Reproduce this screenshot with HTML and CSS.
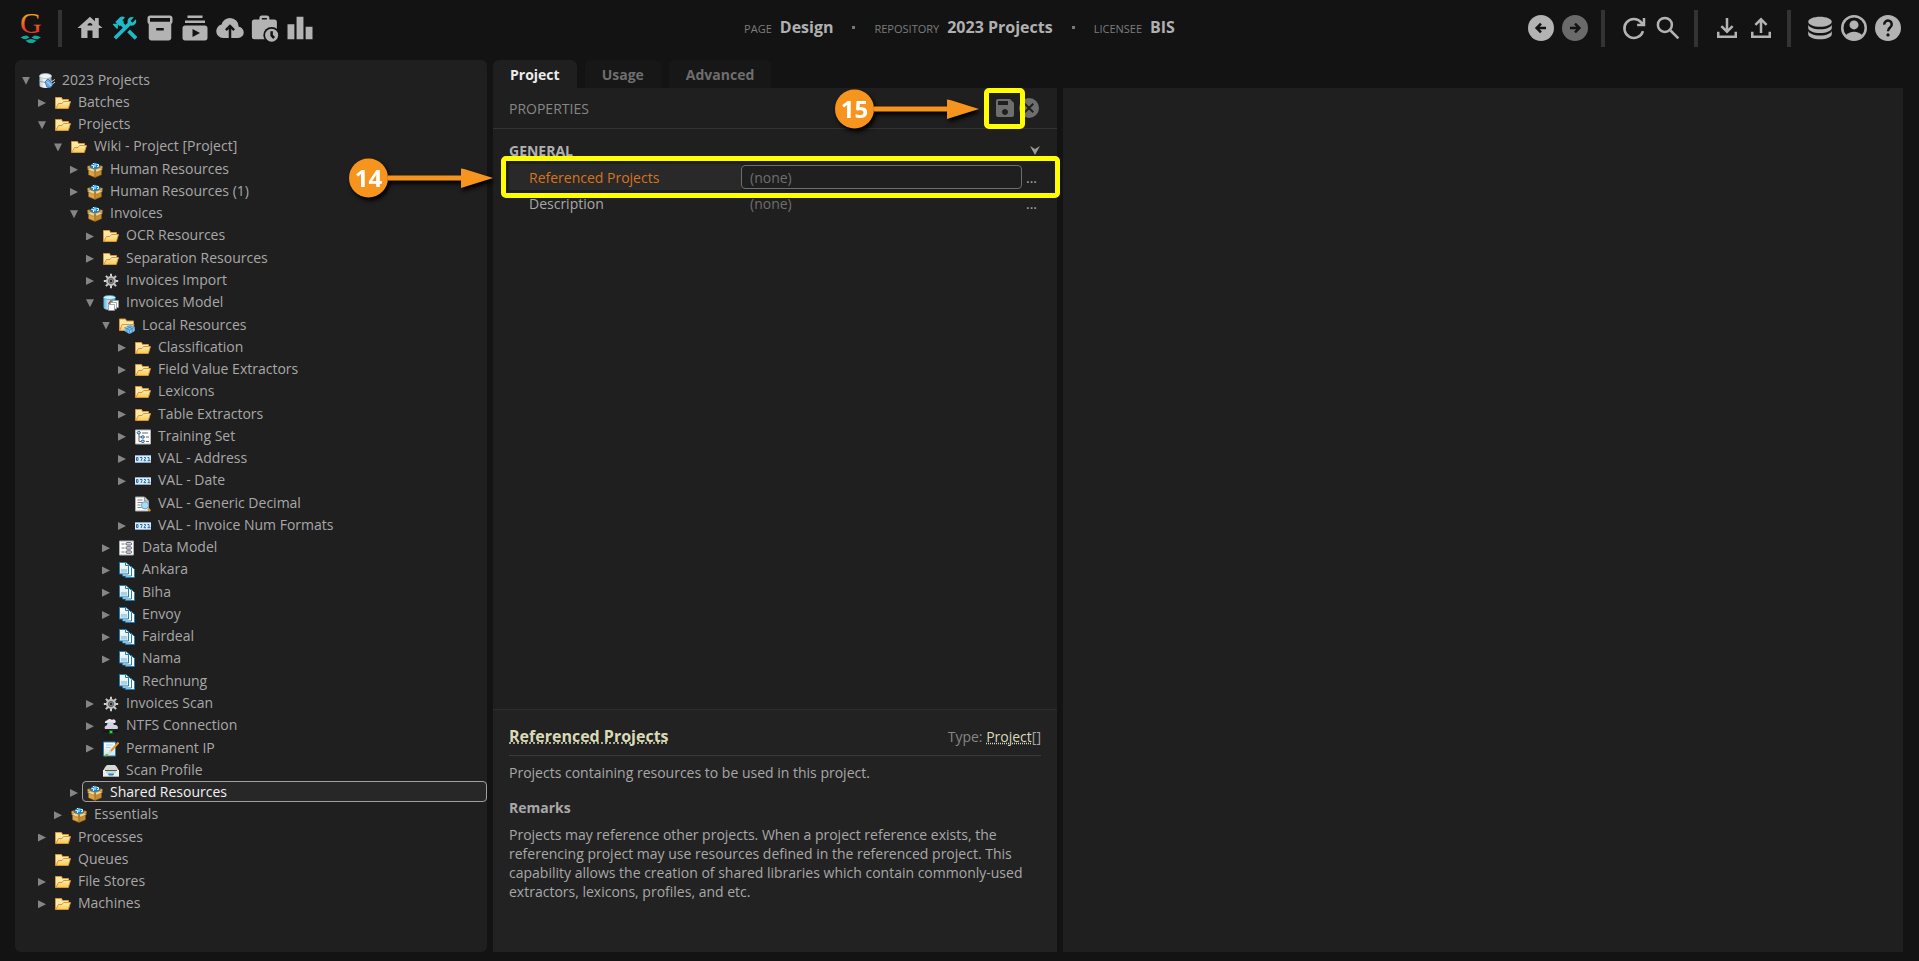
FILE: index.html
```html
<!DOCTYPE html>
<html lang="en">
<head>
<meta charset="utf-8">
<title>Design - 2023 Projects</title>
<link rel="stylesheet" href="styles.css">
</head>
<body>
<svg class="defs" aria-hidden="true">
  <defs>
    <linearGradient id="flame" x1="0" y1="0" x2="0" y2="1"><stop offset="0.25" stop-color="#f6a21d"/><stop offset="0.75" stop-color="#e8372a"/></linearGradient>
    <linearGradient id="gold" x1="0" y1="0" x2="0" y2="1"><stop offset="0" stop-color="#ffeeb0"/><stop offset="1" stop-color="#fbc956"/></linearGradient>
    <linearGradient id="steel" x1="0" y1="0" x2="1" y2="0"><stop offset="0" stop-color="#b9c6cf"/><stop offset="0.4" stop-color="#f3f7f9"/><stop offset="1" stop-color="#8fa0ab"/></linearGradient>
    <linearGradient id="aqua" x1="0" y1="0" x2="1" y2="0"><stop offset="0" stop-color="#5db4dc"/><stop offset="0.4" stop-color="#c2e8f8"/><stop offset="1" stop-color="#2c8fc2"/></linearGradient>
    <linearGradient id="sheet" x1="0" y1="0" x2="0" y2="1"><stop offset="0" stop-color="#ffffff"/><stop offset="1" stop-color="#cfe7ef"/></linearGradient>
  </defs>
  <symbol id="folder" viewBox="0 0 16 16">
    <path d="M.5 13.500V2.500H6.500L7.500 4.500H13.500V7" fill="#ffe9a6" stroke="#d8983a"/>
    <path d="M.8 13.500 3.500 8.500H7L8.500 6.500H15.500L13.300 13.500Z" fill="url(#gold)" stroke="#d8983a"/>
  </symbol>
  <symbol id="repo" viewBox="0 0 16 16">
    <path d="M.5 3V12.500C.5 14 3 15 6.500 15S12.500 14 12.500 12.500V3Z" fill="url(#steel)"/>
    <ellipse cx="6.500" cy="3" rx="6" ry="2.500" fill="#eef4f7" stroke="#a9b8c1" stroke-width=".7"/>
    <path d="M.5 7.500C2 9.800 11 9.800 12.500 7.500" fill="none" stroke="#8799a5"/>
    <path d="M6 9 9 6 14 11 11.500 14.500 8 14Z" fill="#67aee8" stroke="#2f6fae" stroke-width=".8"/>
    <path d="M12 9 15.800 6.500M13.500 11 16 9M8 8.500 12.500 13" stroke="#d6dfe5" stroke-width="1"/>
  </symbol>
  <symbol id="crate" viewBox="0 0 16 16">
    <path d="M2.800 6A5.200 5.200 0 0 1 13.200 6L8 8Z" fill="#1a86c8"/>
    <path d="M4.500 3.500H6.500V6M8 1.500V5M9.500 2.500h2v2H10M6 1.500h1" stroke="#e7f6ff" stroke-width="1" fill="none"/>
    <path d="M.3 4.500 2.500 3.500 3.500 6 1 7.500ZM15.700 4.500 13.500 3.500 12.500 6 15 7.500Z" fill="#dfae55" stroke="#8a5a1a" stroke-width=".5"/>
    <path d="M1.500 7.500 8 8.500V15.500L1.500 12.800Z" fill="#dca548" stroke="#8a5a1a" stroke-width=".5"/>
    <path d="M14.500 7.500 8 8.500V15.500L14.500 12.800Z" fill="#c88b30" stroke="#8a5a1a" stroke-width=".5"/>
    <path d="M.6 7.500 3 5.800 8 7.500 6.500 10.300ZM15.400 7.500 13 5.800 8 7.500 9.500 10.300Z" fill="#f5d592" stroke="#9a6a25" stroke-width=".5"/>
  </symbol>
  <symbol id="gear" viewBox="0 0 16 16">
    <path d="M8 .8V15.200M.8 8H15.200M2.900 2.900 13.100 13.100M13.100 2.900 2.900 13.100" stroke="#cfcfcf" stroke-width="2"/>
    <circle cx="8" cy="8" r="5" fill="#bdbdbd"/>
    <circle cx="8" cy="8" r="2.600" fill="#8a8a8a" stroke="#5c5c5c"/><circle cx="8" cy="8" r="1.200" fill="#222"/>
  </symbol>
  <symbol id="model" viewBox="0 0 16 16">
    <path d="M.5 2.500V12C.5 14 3 14.800 6.500 14.800S12.500 14 12.500 12V2.500Z" fill="url(#aqua)"/>
    <ellipse cx="6.500" cy="2.500" rx="6" ry="2" fill="#d6f0fb" stroke="#4aa3cf" stroke-width=".8"/>
    <path d="M5.500 9 8.500 5.500" stroke="#d8342b" stroke-width="1.500"/><path d="M8 6 10 5" stroke="#4caf3a" stroke-width="1.500"/>
    <g fill="#fff" stroke="#8d949a" stroke-width=".8"><path d="M9.500 5.500h6v7h-6z"/><path d="M7.500 7.500h6v6.500h-6z"/><path d="M5.500 9.500h6v6h-6z"/></g>
  </symbol>
  <symbol id="local" viewBox="0 0 16 16">
    <path d="M.5 12.500V1H6.500L7.500 3H14.500V6" fill="#ffe9a6" stroke="#d8983a"/>
    <path d="M.8 12.500 3 6.500H15L13 12.500Z" fill="url(#gold)" stroke="#d8983a"/>
    <path d="M5.500 9.500 11 6.500 15.800 9V13L10.500 16 5.500 13Z" fill="#7cc0ee"/>
    <path d="M5.500 9.500 10.500 12 15.800 9M10.500 12V16M8 8 13.300 10.600V14.400M13.300 7.800 8 10.800V14.500" fill="none" stroke="#3f88c5" stroke-width=".7"/>
  </symbol>
  <symbol id="training" viewBox="0 0 16 16">
    <path d="M.5 1h15v14H.5z" fill="#fff" stroke="#b8b8b8"/>
    <path d="M4 4v8.500M4 8h3M4 12.500h3M7 4h6M11 8h3M11 12.500h3" stroke="#666" fill="none"/>
    <g fill="#bfe0ff" stroke="#265d9c"><ellipse cx="3.800" cy="3.700" rx="1.600" ry="1.200"/><ellipse cx="7.800" cy="8" rx="1.600" ry="1.200"/><ellipse cx="7.800" cy="12.300" rx="1.600" ry="1.200"/></g>
  </symbol>
  <symbol id="digits" viewBox="0 0 16 16">
    <path d="M0 4h16v8H0z" fill="#dceaf6"/><path d="M0 4.500h16M0 11.500h16" stroke="#8fa6c6"/>
    <path d="M1.500 6.500h1.500v3H1.500zM5 6.500h2v1L6 10M9 6.500h1.500v1.300L9 9v.7h2M12.500 6.500h1.500v3M12.500 9.700h3" fill="none" stroke="#2373ab" stroke-width="1"/>
  </symbol>
  <symbol id="lookup" viewBox="0 0 16 16">
    <path d="M.5 1h9l4 4v10H.5z" fill="#f8f8f8" stroke="#aaa"/><path d="M9.500 1v4h4" fill="#ccc" stroke="#999"/>
    <path d="M2.500 4h5M2.500 6.500h5M2.500 9h3M2.500 11.500h4" stroke="#888"/>
    <circle cx="10" cy="9.300" r="3.600" fill="#a9ddf5" stroke="#5aa6d0"/><path d="M13 12.500 15.300 15" stroke="#e8951f" stroke-width="2.200"/>
  </symbol>
  <symbol id="datamodel" viewBox="0 0 16 16">
    <path d="M.5 1h14v14H.5z" fill="#fff" stroke="#a9adb8"/>
    <path d="M2.500 4h3M2.500 8h3M2.500 12h3" stroke="#777"/>
    <g fill="#f4f4fa" stroke="#4d5364"><rect x="7" y="2.700" width="5.500" height="2.300" rx="1"/><rect x="7" y="6.800" width="5.500" height="2.300" rx="1"/><rect x="7" y="10.900" width="5.500" height="2.300" rx="1"/></g>
  </symbol>
  <symbol id="doctype" viewBox="0 0 16 16">
    <path d="M6.500 4.500h6l3 3v8h-9z" fill="#fff" stroke="#1d7db5"/>
    <path d="M3.500 2.500h6l3 3v8.500h-9z" fill="#fff" stroke="#1d7db5"/>
    <path d="M.5 .5h6.500l2.500 2.500v9h-9z" fill="url(#sheet)" stroke="#1d7db5"/>
    <path d="M6.500 .5v3h3" fill="#fff" stroke="#1d7db5"/><path d="M2 7h6v3.500H2z" fill="#a9d3e4"/>
  </symbol>
  <symbol id="network" viewBox="0 0 16 16">
    <path d="M2 5a2 2 0 0 1 2-2.500A3 3 0 0 1 9 2a2 2 0 0 1 3 3z" fill="#e6e6f2"/>
    <path d="M4.500 4.500h6V8h-6z" fill="#c4c4d8"/>
    <path d="M2 11a2.300 2.300 0 0 1 1.500-3.500A4 4 0 0 1 11 7a3 3 0 0 1 4 2.500Q15 11 14 11z" fill="#d2d2e4"/>
    <path d="M0 13.500h16" stroke="#111"/><path d="M6.500 12.500h3v3h-3z" fill="#36d24a" stroke="#0a6a18"/>
  </symbol>
  <symbol id="permanent" viewBox="0 0 16 16">
    <path d="M.5 1h12v14H.5z" fill="url(#sheet)" stroke="#2382ba"/><path d="M3 4h7M3 6.500h5" stroke="#a9cfe0"/>
    <path d="M15.500 1.500 7 11" stroke="#ea9123" stroke-width="2"/><path d="M8 10 5 13.500" stroke="#d9d9d9" stroke-width="2"/><path d="M1.500 15.500Q2 12 5 13 6 15 1.500 15.500Z" fill="#74bd2b"/>
  </symbol>
  <symbol id="scanner" viewBox="0 0 16 16">
    <path d="M4 2h8q2.500 2 3.500 5H.5Q1.500 4 4 2Z" fill="#d7d7d7"/><path d="M0 7h16v7H0z" fill="#ededed"/><path d="M2 7.500h12" stroke="#4f5a4a"/><path d="M3 9h10" stroke="#a9c49a"/>
    <path d="M4.500 10.500h7L10 12.500H6z" fill="#1781d8"/><path d="M0 13.500h16" stroke="#aaa"/>
  </symbol>
</svg>

<header class="topbar">
  <div class="tools">
    <svg class="logo" viewBox="0 0 24 32" role="img" aria-label="Grooper">
      <text x="1" y="21" class="logo-letter" fill="url(#flame)">G</text>
      <path d="M1.500 25.500 4.500 24 8 23.500 10.500 25.500 7 27.200 4.500 27ZM12.500 25.500 15.500 23.500 19 24 22 25.500 18.500 27.200 15.500 27ZM6.500 28.800 9.500 27.500 12 27 14.500 27.500 17.500 28.800 14 31 10 31Z" fill="#10a79c"/>
    </svg>
    <span class="sep sep-first"></span>
    <nav class="icons" aria-label="Pages">
      <button class="icon" aria-label="Home"><svg viewBox="0 0 24 24"><path d="M19 9.300V4h-3v2.600L12 3 2 12h3v8h5v-6h4v6h5v-8h3l-3-2.700zm-9 .7c0-1.100.9-2 2-2s2 .9 2 2h-4z"/></svg></button>
      <button class="icon active" aria-label="Design"><svg viewBox="0 0 24 24"><path d="M13.780 15.300L19.780 21.300L21.890 19.140L15.890 13.140L13.780 15.300M17.500 10.100C17.110 10.100 16.690 10.050 16.360 9.910L4.970 21.250L2.860 19.140L10.270 11.740L8.500 9.960L7.780 10.660L6.330 9.250V12.110L5.630 12.810L2.110 9.250L2.810 8.550H5.620L4.220 7.140L7.780 3.580C8.950 2.410 10.830 2.410 12 3.580L9.890 5.740L11.300 7.140L10.590 7.850L12.380 9.630L14.200 7.750C14.060 7.420 14 7 14 6.630C14 4.660 15.560 3.110 17.500 3.110C18.090 3.110 18.610 3.250 19.080 3.530L16.410 6.200L17.910 7.700L20.580 5.030C20.860 5.500 21 6 21 6.630C21 8.550 19.450 10.100 17.500 10.100Z"/></svg></button>
      <button class="icon" aria-label="Batches"><svg viewBox="0 0 24 24"><path d="M20 2H4c-1 0-2 .9-2 2v3.010c0 .72.43 1.340 1 1.690V20c0 1.100 1.100 2 2 2h14c.9 0 2-.9 2-2V8.700c.57-.35 1-.97 1-1.690V4c0-1.100-1-2-2-2zm-5 12H9v-2h6v2zm5-7H4V4h16v3z"/></svg></button>
      <button class="icon" aria-label="Tasks"><svg viewBox="0 0 24 24"><path d="M20 8H4V6h16v2zm-2-6H6v2h12V2zm4 10v8c0 1.100-.9 2-2 2H4c-1.100 0-2-.9-2-2v-8c0-1.100.9-2 2-2h16c1.100 0 2 .9 2 2zm-6 4l-6-3.270v6.530L16 16z"/></svg></button>
      <button class="icon" aria-label="Imports"><svg viewBox="0 0 24 24"><path d="M11 20H6.500Q4.220 20 2.610 18.430 1 16.850 1 14.580 1 12.630 2.170 11.100 3.350 9.570 5.250 9.150 5.880 6.850 7.750 5.430 9.630 4 12 4 14.930 4 16.960 6.040 19 8.070 19 11 20.730 11.200 21.860 12.500 23 13.780 23 15.500 23 17.380 21.690 18.690 20.380 20 18.500 20H13V12.850L14.600 14.400 16 13 12 9 8 13 9.400 14.400 11 12.850Z"/></svg></button>
      <button class="icon" aria-label="Jobs"><svg viewBox="0 0 24 24"><path fill-rule="evenodd" d="M3.500 5.200H7.500V4Q7.500 2 9.500 2h4Q15.500 2 15.500 4V5.200H19.500q2 0 2 2V21H3.500Q1.500 21 1.500 19V7.200Q1.500 5.200 3.500 5.200ZM9.500 5.200h4V4h-4Z"/><circle cx="17.300" cy="17.700" r="6.600" class="cut"/><circle cx="17.300" cy="17.700" r="5.200"/><path d="M17.300 14.500V18l2 2" class="cut-line"/></svg></button>
      <button class="icon" aria-label="Stats"><svg viewBox="0 0 24 24"><path d="M7.500 21H2V9h5.500v12zm7.250-18h-5.500v18h5.500V3zM22 11h-5.500v10H22V11z"/></svg></button>
    </nav>
  </div>

  <div class="crumbs">
    <span class="crumb"><span class="crumb-key">PAGE</span><strong>Design</strong></span>
    <span class="dot"></span>
    <span class="crumb"><span class="crumb-key">REPOSITORY</span><strong>2023 Projects</strong></span>
    <span class="dot"></span>
    <span class="crumb"><span class="crumb-key">LICENSEE</span><strong>BIS</strong></span>
  </div>

  <div class="tools tools-right">
    <div class="icons">
      <button class="icon" aria-label="Back"><svg viewBox="0 0 24 24"><circle cx="12" cy="12" r="10.400"/><path d="M16 12H8.800M12 8.500 8.500 12 12 15.500" class="cut-line"/></svg></button>
      <button class="icon dim" aria-label="Forward"><svg viewBox="0 0 24 24"><circle cx="12" cy="12" r="10.400"/><path d="M8 12h7.200M12 8.500 15.500 12 12 15.500" class="cut-line"/></svg></button>
    </div>
    <span class="sep"></span>
    <div class="icons">
      <button class="icon" aria-label="Refresh"><svg viewBox="0 0 24 24"><path d="M19.200 14.500A7.600 7.600 0 1 1 17.800 7.500L19 9M20 4V9.500H14.500" class="line"/></svg></button>
      <button class="icon" aria-label="Search"><svg viewBox="0 0 24 24"><path d="M14 14 20.300 20.300" class="line"/><circle cx="9.500" cy="9.500" r="5.600" class="line"/></svg></button>
    </div>
    <span class="sep"></span>
    <div class="icons">
      <button class="icon" aria-label="Download"><svg viewBox="0 0 24 24"><path d="M5 15v4h14v-4M12 4v10.500M7.500 10.500 12 15l4.500-4.500" class="line"/></svg></button>
      <button class="icon" aria-label="Upload"><svg viewBox="0 0 24 24"><path d="M5 15v4h14v-4M12 16V5.500M7.500 9.500 12 5l4.500 4.500" class="line"/></svg></button>
    </div>
    <span class="sep"></span>
    <div class="icons">
      <button class="icon" aria-label="Repositories"><svg viewBox="2.500 2.500 19 19" preserveAspectRatio="none" class="wide"><path d="M12,3C7.580,3 4,4.790 4,7C4,9.210 7.580,11 12,11C16.420,11 20,9.210 20,7C20,4.790 16.420,3 12,3M4,9V12C4,14.210 7.580,16 12,16C16.420,16 20,14.210 20,12V9C20,11.210 16.420,13 12,13C7.580,13 4,11.210 4,9M4,14V17C4,19.210 7.580,21 12,21C16.420,21 20,19.210 20,17V14C20,16.210 16.420,18 12,18C7.580,18 4,16.210 4,14Z"/></svg></button>
      <button class="icon" aria-label="Account"><svg viewBox="0 0 24 24"><circle cx="12" cy="12" r="9.400" class="line"/><circle cx="12" cy="9.500" r="3.600"/><path d="M5.300 17.800Q8 15 12 15t6.700 2.800Q16 21.500 12 21.500T5.300 17.800Z"/></svg></button>
      <button class="icon" aria-label="Help"><svg viewBox="0 0 24 24"><circle cx="12" cy="12" r="10.400"/><path d="M9 9.300A3 3 0 1 1 13.800 11.500Q12 12.700 12 14.500" class="cut-line"/><circle cx="12" cy="17.500" r="1.300" class="cut"/></svg></button>
    </div>
  </div>
</header>

<main class="workspace">
  <nav class="tree-panel" aria-label="Node tree">
    <ul class="tree">
      <li class="row d0"><button class="toggle open" aria-label="Collapse"></button><a class="node" href="#"><svg><use href="#repo"/></svg>2023 Projects</a></li>
      <li class="row d1"><button class="toggle" aria-label="Expand"></button><a class="node" href="#"><svg><use href="#folder"/></svg>Batches</a></li>
      <li class="row d1"><button class="toggle open" aria-label="Collapse"></button><a class="node" href="#"><svg><use href="#folder"/></svg>Projects</a></li>
      <li class="row d2"><button class="toggle open" aria-label="Collapse"></button><a class="node" href="#"><svg><use href="#folder"/></svg>Wiki - Project [Project]</a></li>
      <li class="row d3"><button class="toggle" aria-label="Expand"></button><a class="node" href="#"><svg><use href="#crate"/></svg>Human Resources</a></li>
      <li class="row d3"><button class="toggle" aria-label="Expand"></button><a class="node" href="#"><svg><use href="#crate"/></svg>Human Resources (1)</a></li>
      <li class="row d3"><button class="toggle open" aria-label="Collapse"></button><a class="node" href="#"><svg><use href="#crate"/></svg>Invoices</a></li>
      <li class="row d4"><button class="toggle" aria-label="Expand"></button><a class="node" href="#"><svg><use href="#folder"/></svg>OCR Resources</a></li>
      <li class="row d4"><button class="toggle" aria-label="Expand"></button><a class="node" href="#"><svg><use href="#folder"/></svg>Separation Resources</a></li>
      <li class="row d4"><button class="toggle" aria-label="Expand"></button><a class="node" href="#"><svg><use href="#gear"/></svg>Invoices Import</a></li>
      <li class="row d4"><button class="toggle open" aria-label="Collapse"></button><a class="node" href="#"><svg><use href="#model"/></svg>Invoices Model</a></li>
      <li class="row d5"><button class="toggle open" aria-label="Collapse"></button><a class="node" href="#"><svg><use href="#local"/></svg>Local Resources</a></li>
      <li class="row d6"><button class="toggle" aria-label="Expand"></button><a class="node" href="#"><svg><use href="#folder"/></svg>Classification</a></li>
      <li class="row d6"><button class="toggle" aria-label="Expand"></button><a class="node" href="#"><svg><use href="#folder"/></svg>Field Value Extractors</a></li>
      <li class="row d6"><button class="toggle" aria-label="Expand"></button><a class="node" href="#"><svg><use href="#folder"/></svg>Lexicons</a></li>
      <li class="row d6"><button class="toggle" aria-label="Expand"></button><a class="node" href="#"><svg><use href="#folder"/></svg>Table Extractors</a></li>
      <li class="row d6"><button class="toggle" aria-label="Expand"></button><a class="node" href="#"><svg><use href="#training"/></svg>Training Set</a></li>
      <li class="row d6"><button class="toggle" aria-label="Expand"></button><a class="node" href="#"><svg><use href="#digits"/></svg>VAL - Address</a></li>
      <li class="row d6"><button class="toggle" aria-label="Expand"></button><a class="node" href="#"><svg><use href="#digits"/></svg>VAL - Date</a></li>
      <li class="row d6"><span class="toggle leaf"></span><a class="node" href="#"><svg><use href="#lookup"/></svg>VAL - Generic Decimal</a></li>
      <li class="row d6"><button class="toggle" aria-label="Expand"></button><a class="node" href="#"><svg><use href="#digits"/></svg>VAL - Invoice Num Formats</a></li>
      <li class="row d5"><button class="toggle" aria-label="Expand"></button><a class="node" href="#"><svg><use href="#datamodel"/></svg>Data Model</a></li>
      <li class="row d5"><button class="toggle" aria-label="Expand"></button><a class="node" href="#"><svg><use href="#doctype"/></svg>Ankara</a></li>
      <li class="row d5"><button class="toggle" aria-label="Expand"></button><a class="node" href="#"><svg><use href="#doctype"/></svg>Biha</a></li>
      <li class="row d5"><button class="toggle" aria-label="Expand"></button><a class="node" href="#"><svg><use href="#doctype"/></svg>Envoy</a></li>
      <li class="row d5"><button class="toggle" aria-label="Expand"></button><a class="node" href="#"><svg><use href="#doctype"/></svg>Fairdeal</a></li>
      <li class="row d5"><button class="toggle" aria-label="Expand"></button><a class="node" href="#"><svg><use href="#doctype"/></svg>Nama</a></li>
      <li class="row d5"><span class="toggle leaf"></span><a class="node" href="#"><svg><use href="#doctype"/></svg>Rechnung</a></li>
      <li class="row d4"><button class="toggle" aria-label="Expand"></button><a class="node" href="#"><svg><use href="#gear"/></svg>Invoices Scan</a></li>
      <li class="row d4"><button class="toggle" aria-label="Expand"></button><a class="node" href="#"><svg><use href="#network"/></svg>NTFS Connection</a></li>
      <li class="row d4"><button class="toggle" aria-label="Expand"></button><a class="node" href="#"><svg><use href="#permanent"/></svg>Permanent IP</a></li>
      <li class="row d4"><span class="toggle leaf"></span><a class="node" href="#"><svg><use href="#scanner"/></svg>Scan Profile</a></li>
      <li class="row d3"><button class="toggle" aria-label="Expand"></button><a class="node selected" href="#" aria-current="true"><svg><use href="#crate"/></svg>Shared Resources</a></li>
      <li class="row d2"><button class="toggle" aria-label="Expand"></button><a class="node" href="#"><svg><use href="#crate"/></svg>Essentials</a></li>
      <li class="row d1"><button class="toggle" aria-label="Expand"></button><a class="node" href="#"><svg><use href="#folder"/></svg>Processes</a></li>
      <li class="row d1"><span class="toggle leaf"></span><a class="node" href="#"><svg><use href="#folder"/></svg>Queues</a></li>
      <li class="row d1"><button class="toggle" aria-label="Expand"></button><a class="node" href="#"><svg><use href="#folder"/></svg>File Stores</a></li>
      <li class="row d1"><button class="toggle" aria-label="Expand"></button><a class="node" href="#"><svg><use href="#folder"/></svg>Machines</a></li>
    </ul>
  </nav>

  <section class="editor">
    <div class="tabs" role="tablist">
      <button class="tab current" role="tab" aria-selected="true">Project</button>
      <button class="tab" role="tab" aria-selected="false">Usage</button>
      <button class="tab" role="tab" aria-selected="false">Advanced</button>
    </div>
    <div class="panel">
      <div class="panel-head">
        <h2 class="panel-title">PROPERTIES</h2>
        <div class="marked">
          <button class="action" aria-label="Save"><svg viewBox="0 0 24 24"><path d="M17 3H5c-1.110 0-2 .9-2 2v14c0 1.100.89 2 2 2h14c1.100 0 2-.9 2-2V7l-4-4zm-5 16c-1.660 0-3-1.340-3-3s1.340-3 3-3 3 1.340 3 3-1.340 3-3 3zm3-10H5V5h10v4z"/></svg></button>
          <div class="frame frame-save"></div>
          <div class="callout callout-save"><span class="badge">15</span><span class="shaft"></span><span class="tip"></span></div>
        </div>
        <button class="action" aria-label="Cancel"><svg viewBox="0 0 24 24"><path fill-rule="evenodd" d="M12 2a10 10 0 1 0 0 20 10 10 0 0 0 0-20Zm5 13.600L15.600 17 12 13.400 8.400 17 7 15.600 10.600 12 7 8.400 8.400 7 12 10.600 15.600 7 17 8.400 13.400 12Z"/></svg></button>
      </div>
      <div class="props">
        <button class="group">GENERAL<svg class="chevron" viewBox="0 0 10 9"><path d="M0 0 5 3 10 0 5 9Z"/></svg></button>
        <div class="prop focused">
          <label class="prop-name" for="refs">Referenced Projects</label>
          <input class="prop-value" id="refs" type="text" placeholder="(none)">
          <button class="more" aria-label="Edit referenced projects">...</button>
          <div class="frame frame-row"></div>
          <div class="callout callout-row"><span class="badge">14</span><span class="shaft"></span><span class="tip"></span></div>
        </div>
        <div class="prop">
          <label class="prop-name" for="desc">Description</label>
          <input class="prop-value" id="desc" type="text" placeholder="(none)">
          <button class="more" aria-label="Edit description">...</button>
        </div>
      </div>
      <article class="help">
        <div class="help-head">
          <a class="help-title" href="#">Referenced Projects</a>
          <span class="type">Type: <a class="type-link" href="#">Project</a><span class="brackets">[]</span></span>
        </div>
        <p class="summary">Projects containing resources to be used in this project.</p>
        <h3 class="remarks">Remarks</h3>
        <p class="body">Projects may reference other projects. When a project reference exists, the referencing project may use resources defined in the referenced project. This capability allows the creation of shared libraries which contain commonly-used extractors, lexicons, profiles, and etc.</p>
      </article>
    </div>
  </section>

  <section class="viewer" aria-label="Viewer"></section>
</main>
</body>
</html>
```
FILE: styles.css
```css
* { box-sizing: border-box; }

body {
  margin: 0;
  min-height: 100vh;
  display: flex;
  flex-direction: column;
  background: #131313;
  color: #a8a8a8;
  font: 14px/19px "Open Sans", "Noto Sans", sans-serif;
}

button, input { font: inherit; color: inherit; background: none; border: 0; padding: 0; margin: 0; }
a { color: inherit; text-decoration: none; }
h2, h3, p, ul { margin: 0; padding: 0; }
.defs { position: absolute; width: 0; height: 0; }

/* Top bar */
.topbar {
  display: grid;
  grid-template-columns: 1fr auto 1fr;
  align-items: center;
  height: 56px;
  margin-bottom: 4px;
  padding: 0 16px;
}
.tools { display: flex; align-items: center; padding-left: 3px; }
.tools-right { justify-content: flex-end; padding-left: 0; }
.logo { width: 24px; height: 32px; overflow: visible; }
.logo-letter { font: 30px "Liberation Serif", serif; }
.sep { width: 4px; height: 37px; margin: 0 14px 0 11px; background: #333; }
.sep-first { margin: 0 13px 0 15px; }
.icons { display: flex; gap: 5px; }
.tools-right .icons { gap: 4px; }
.icon { display: block; width: 30px; height: 30px; color: #b3b3b3; }
.icon svg { display: block; width: 30px; height: 30px; fill: currentColor; }
.icon svg.wide { width: 28px; height: 24px; margin: 3px 1px; }
.active { color: #1fb9c8; }
.dim { color: #6a6a6a; }
.icon .line { fill: none; stroke: currentColor; stroke-width: 2; }
.icon .cut { fill: #131313; }
.icon .cut-line { fill: none; stroke: #131313; stroke-width: 2; }

.crumbs { display: flex; align-items: center; gap: 19px; padding-bottom: 2px; }
.crumb { display: flex; align-items: baseline; gap: 8px; }
.crumb-key { font-size: 11px; color: #7c7c7c; }
.crumb strong { font-size: 16px; line-height: 22px; color: #b0b0b0; }
.dot { width: 3px; height: 3px; background: #777; }

/* Workspace columns */
.workspace {
  flex: 1;
  display: grid;
  grid-template-columns: 472fr 564fr 840fr;
  gap: 6px;
  padding: 0 16px 9px 15px;
}
.tree-panel {
  display: flex;
  padding: 8px 0 38px;
  border-radius: 6px;
  background: #1f1f1f;
}
.viewer { margin-top: 28px; background: #1f1f1f; }

/* Tree */
.tree { flex: 1; display: grid; grid-auto-rows: 1fr; list-style: none; }
.row { display: flex; align-items: center; padding-left: 7px; }
.d1 { padding-left: 23px; }
.d2 { padding-left: 39px; }
.d3 { padding-left: 55px; }
.d4 { padding-left: 71px; }
.d5 { padding-left: 87px; }
.d6 { padding-left: 103px; }
.toggle { width: 12px; height: 16px; padding-top: 3px; }
.toggle::before {
  content: "";
  display: block;
  width: 8px;
  height: 8px;
  background: #858585;
  clip-path: polygon(0 0, 100% 50%, 0 100%);
}
.toggle.open::before { clip-path: polygon(0 0, 100% 0, 50% 100%); }
.leaf::before { display: none; }
.node {
  flex: 1;
  display: flex;
  align-items: center;
  gap: 7px;
  padding-left: 4px;
  border: 1px solid transparent;
  border-radius: 4px;
}
.node svg { width: 16px; height: 16px; margin-top: 3px; }
.selected { background: #272727; border-color: #a0a0a0; color: #f2f2f2; }

/* Editor */
.editor { display: flex; flex-direction: column; }
.tabs { display: flex; gap: 8px; height: 28px; }
.tab {
  padding: 0 17px;
  border-radius: 6px 6px 0 0;
  background: #171717;
  color: #6e6e6e;
  font-weight: 700;
}
.current { background: #1f1f1f; color: #ececec; }
.panel { flex: 1; display: flex; flex-direction: column; background: #1f1f1f; }
.panel-head {
  display: flex;
  align-items: center;
  height: 41px;
  padding: 0 16px;
  border-bottom: 1px solid #333;
}
.panel-title { flex: 1; font-size: 14px; font-weight: 400; color: #868686; }
.action { display: block; width: 24px; height: 24px; color: #6e6e6e; }
.action svg { display: block; width: 24px; height: 24px; fill: currentColor; }

.props { flex: 1; padding: 12px 16px; }
.group {
  display: flex;
  align-items: center;
  justify-content: space-between;
  width: 100%;
  height: 23px;
  padding-bottom: 4px;
  font-weight: 700;
  color: #b0b0b0;
}
.chevron { width: 10px; height: 9px; margin-right: 1px; fill: #999; }
.prop {
  position: relative;
  display: grid;
  grid-template-columns: 232fr 281fr 19px;
  align-items: center;
  height: 26px;
}
.prop-name { padding: 1px 0 0 20px; line-height: 25px; }
.focused .prop-name { background: #292929; color: #d8741c; }
.prop-value {
  width: 100%;
  min-width: 0;
  height: 24px;
  padding: 1px 8px 0;
  border: 1px solid transparent;
  border-radius: 4px;
}
.prop-value::placeholder { color: #6e6e6e; opacity: 1; }
.focused .prop-value { border-color: #6e6e6e; }
.more { padding-left: 4px; text-align: left; }

/* Help */
.help {
  height: 243px;
  padding: 15px 16px;
  border-top: 1px solid #2d2d2d;
  background: #222;
}
.help-head {
  display: flex;
  justify-content: space-between;
  align-items: baseline;
  padding-bottom: 8px;
  margin-bottom: 7px;
  border-bottom: 1px solid #3a3a3a;
}
.help-title {
  font-size: 16px;
  line-height: 22px;
  font-weight: 700;
  color: #dadab8;
  text-decoration: underline dotted;
}
.type { color: #868686; }
.type-link { color: #dadab8; text-decoration: underline dotted; }
.brackets { color: #a8a8a8; }
.remarks { margin: 16px 0 8px; font-size: 14px; font-weight: 700; }

/* Annotations */
.marked { position: relative; }
.frame {
  position: absolute;
  border: 5px solid #ffff00;
  border-radius: 5px;
  pointer-events: none;
  z-index: 2;
}
.frame-save { inset: -8px -8px -9px -9px; }
.frame-row { inset: -8px -19px -8px -8px; }
.callout {
  position: absolute;
  top: 50%;
  right: 100%;
  display: flex;
  align-items: center;
  margin-top: 1px;
  transform: translateY(-50%);
  filter: drop-shadow(2px 3px 2px #000);
  z-index: 2;
}
.callout-save { margin-right: 14px; }
.callout-row { margin-right: 16px; }
.badge {
  width: 39px;
  height: 39px;
  border-radius: 50%;
  background: #f7941d;
  color: #fff;
  font-size: 24px;
  font-weight: 700;
  line-height: 38px;
  text-align: center;
}
.shaft { width: 73px; height: 5px; background: #f7941d; }
.tip {
  width: 32px;
  height: 20px;
  background: #f7941d;
  clip-path: polygon(0 0, 100% 50%, 0 100%);
}
```
